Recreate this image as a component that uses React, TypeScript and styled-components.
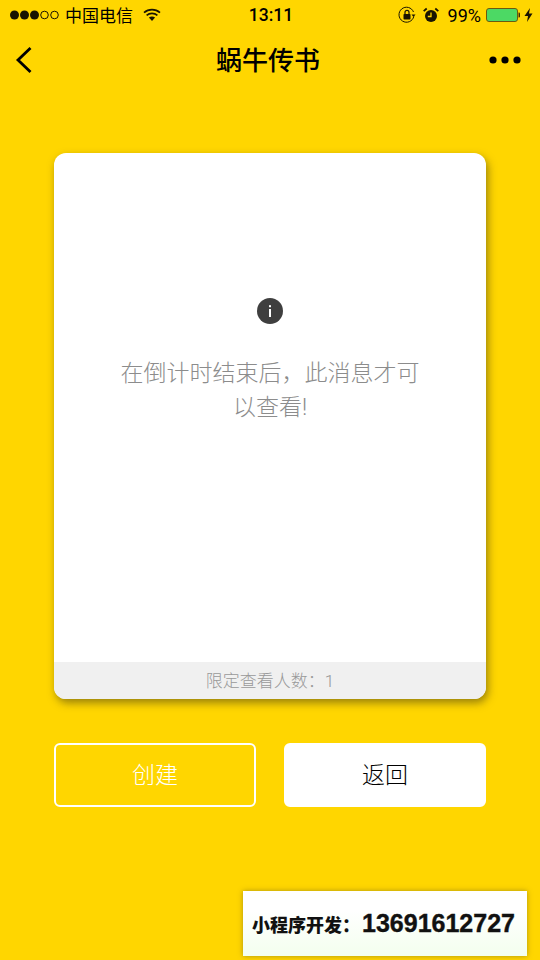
import React from "react";
import styled, { createGlobalStyle } from "styled-components";

const Global = createGlobalStyle`
  html, body { margin: 0; padding: 0; background: #ffd600; }
  * { box-sizing: border-box; }
`;
const FONT = `"Liberation Sans", "Noto Sans CJK SC", sans-serif`;
const LIGHT_FONT = `Roboto, "Noto Sans CJK SC", sans-serif`;

const Page = styled.div`
  position: relative;
  width: 540px;
  height: 960px;
  overflow: hidden;
  background: #ffd600;
  font-family: ${FONT};
  color: #000;
`;
const StatusBar = styled.div`
  height: 30px;
  padding: 0 7px 0 9px;
  display: grid;
  grid-template-columns: 1fr auto 1fr;
  align-items: center;
  color: #000;
`;
const StatusLeft = styled.div`
  display: flex;
  align-items: center;
`;
const StatusRight = styled.div`
  display: flex;
  align-items: center;
  justify-content: flex-end;
`;
const Carrier = styled.span`
  margin: 0 0 2px 6px;
  font-size: 17px;
  font-weight: 400;
`;
const Clock = styled.span`
  font-family: Roboto, ${FONT};
  font-size: 17.5px;
  font-weight: 500;
`;
const Percent = styled.span`
  font-family: Roboto, ${FONT};
  font-size: 18px;
  margin: 0 5px 0 9px;
`;
const NavBar = styled.div`
  height: 60px;
  padding: 0 19px 0 15px;
  display: grid;
  grid-template-columns: 1fr auto 1fr;
  align-items: center;
`;
const NavEnd = styled.div`
  display: flex;
  justify-content: flex-end;
`;
const NavStart = styled.div`
  display: flex;
`;
const Title = styled.div`
  font-size: 26px;
  font-weight: 500;
  margin-bottom: 4px;
`;
const Content = styled.main`
  padding: 63px 54px 0;
`;
const Card = styled.section`
  height: 546px;
  display: flex;
  flex-direction: column;
  background: #fff;
  border-radius: 12px;
  overflow: hidden;
  box-shadow: 2px 4px 8px rgba(70, 60, 20, 0.55);
`;
const CardBody = styled.div`
  flex: 1;
  padding: 145px 60px 0;
  display: flex;
  flex-direction: column;
  align-items: center;
`;
const Message = styled.p`
  margin: 33px 0 0;
  font-family: ${LIGHT_FONT};
  font-size: 23px;
  font-weight: 300;
  line-height: 34px;
  color: #8c8c8c;
  text-align: center;
`;
const CardFooter = styled.div`
  height: 37px;
  padding-bottom: 3px;
  background: #f0f0f0;
  color: #999;
  font-family: ${LIGHT_FONT};
  font-size: 17px;
  font-weight: 300;
  display: flex;
  align-items: center;
  justify-content: center;
`;
const Actions = styled.div`
  margin-top: 44px;
  display: grid;
  grid-template-columns: 202px 202px;
  justify-content: space-between;
`;
const Action = styled.button<{ $solid?: boolean }>`
  height: 64px;
  border-radius: 6px;
  font-family: ${FONT};
  font-size: 23px;
  font-weight: 300;
  padding: 0 0 5px;
  border: 2px solid #fff;
  background: ${(p) => (p.$solid ? "#fff" : "transparent")};
  color: ${(p) => (p.$solid ? "#000" : "#fff")};
`;
const Badge = styled.div`
  position: absolute;
  left: 243px;
  top: 891px;
  width: 284px;
  height: 65px;
  padding-right: 3px;
  display: flex;
  align-items: center;
  justify-content: center;
  gap: 2px;
  background: linear-gradient(#ffffff 30%, #f3ffee);
  box-shadow: 0 0 5px rgba(90, 80, 30, 0.5);
  font-weight: 700;
  color: #111;
`;
const BadgeLabel = styled.span`
  font-size: 18px;
  font-weight: 900;
`;
const BadgePhone = styled.span`
  font-family: "Liberation Sans", sans-serif;
  font-size: 25px;
  -webkit-text-stroke: 0.4px #111;
`;

const Signal = () => (
  <svg width="50" height="12" viewBox="0 0 50 12">
    {[5, 15, 25].map((x) => <circle key={x} cx={x + 0.5} cy="6" r="4.5" fill="#1a1400" />)}
    {[35, 45].map((x) => <circle key={x} cx={x + 0.5} cy="6" r="3.8" fill="none" stroke="#1a1400" strokeWidth="1" />)}
  </svg>
);
const Wifi = () => (
  <svg width="18" height="14" viewBox="0 0 18 14" style={{ marginLeft: 10 }}>
    <path d="M1 4.6C5.6.6 12.4.6 17 4.6M3.6 7.4c3.1-2.6 7.7-2.6 10.8 0" fill="none" stroke="#1a1400" strokeWidth="1.7" />
    <path d="M5.9 9.6c1.8-1.5 4.4-1.5 6.2 0L9 13z" fill="#1a1400" />
  </svg>
);
const RotationLock = () => (
  <svg width="18" height="18" viewBox="0 0 18 18">
    <path d="M15.8 10.5A7.5 7.5 0 1 1 15.5 6" fill="none" stroke="#1a1400" strokeWidth="1" />
    <path d="M13.5 8.5h4l-2 2.5z" fill="#1a1400" />
    <rect x="5.5" y="8" width="7" height="5.5" rx="0.8" fill="#1a1400" />
    <path d="M7 8V6.3a2 2 0 0 1 4 0V8" fill="none" stroke="#1a1400" strokeWidth="1.2" />
  </svg>
);
const Alarm = () => (
  <svg width="16" height="16" viewBox="0 0 16 16" style={{ marginLeft: 7 }}>
    <circle cx="8" cy="9" r="6" fill="#1a1400" />
    <path d="M8 5.5V9.5H4.8" fill="none" stroke="#ffd600" strokeWidth="1.3" />
    <path d="M.7 4.2 3.7 1.500M15.3 4.2 12.3 1.500" stroke="#1a1400" strokeWidth="1.8" />
  </svg>
);
const Battery = () => (
  <svg width="34" height="14" viewBox="0 0 34 14">
    <rect x="0.5" y="0.5" width="31" height="13" rx="2.5" fill="#4cd964" stroke="#6b5a10" />
    <path d="M32.5 4.5h.5a1 1 0 0 1 1 1v3a1 1 0 0 1-1 1h-.5z" fill="#3a3000" />
  </svg>
);
const Bolt = () => (
  <svg width="9" height="14" viewBox="0 0 9 14" style={{ marginLeft: 4 }}>
    <path d="M6 0 .5 8H4L3 14 8.5 5.5H5z" fill="#1a1400" />
  </svg>
);
const Back = () => (
  <svg width="18" height="28" viewBox="0 0 18 28">
    <path d="M15.5 2 3 14l12.5 12" fill="none" stroke="#000" strokeWidth="2.8" />
  </svg>
);
const More = () => (
  <svg width="32" height="10" viewBox="0 0 32 10">
    {[4, 16, 28].map((x) => <circle key={x} cx={x} cy="5" r="3.6" fill="#000" />)}
  </svg>
);
const Info = () => (
  <svg width="26" height="26" viewBox="0 0 26 26">
    <circle cx="13" cy="13" r="13" fill="#3f3f3f" />
    <rect x="12" y="11" width="2" height="8" fill="#fff" />
    <rect x="12" y="7.2" width="2" height="2" fill="#fff" />
  </svg>
);

export default function App() {
  return (
    <Page>
      <Global />
      <StatusBar>
        <StatusLeft>
          <Signal />
          <Carrier>中国电信</Carrier>
          <Wifi />
        </StatusLeft>
        <Clock>13:11</Clock>
        <StatusRight>
          <RotationLock />
          <Alarm />
          <Percent>99%</Percent>
          <Battery />
          <Bolt />
        </StatusRight>
      </StatusBar>
      <NavBar>
        <NavStart><Back /></NavStart>
        <Title>蜗牛传书</Title>
        <NavEnd><More /></NavEnd>
      </NavBar>
      <Content>
        <Card>
          <CardBody>
            <Info />
            <Message>在倒计时结束后，此消息才可以查看!</Message>
          </CardBody>
          <CardFooter>限定查看人数：1</CardFooter>
        </Card>
        <Actions>
          <Action>创建</Action>
          <Action $solid>返回</Action>
        </Actions>
      </Content>
      <Badge>
        <BadgeLabel>小程序开发：</BadgeLabel>
        <BadgePhone>13691612727</BadgePhone>
      </Badge>
    </Page>
  );
}
